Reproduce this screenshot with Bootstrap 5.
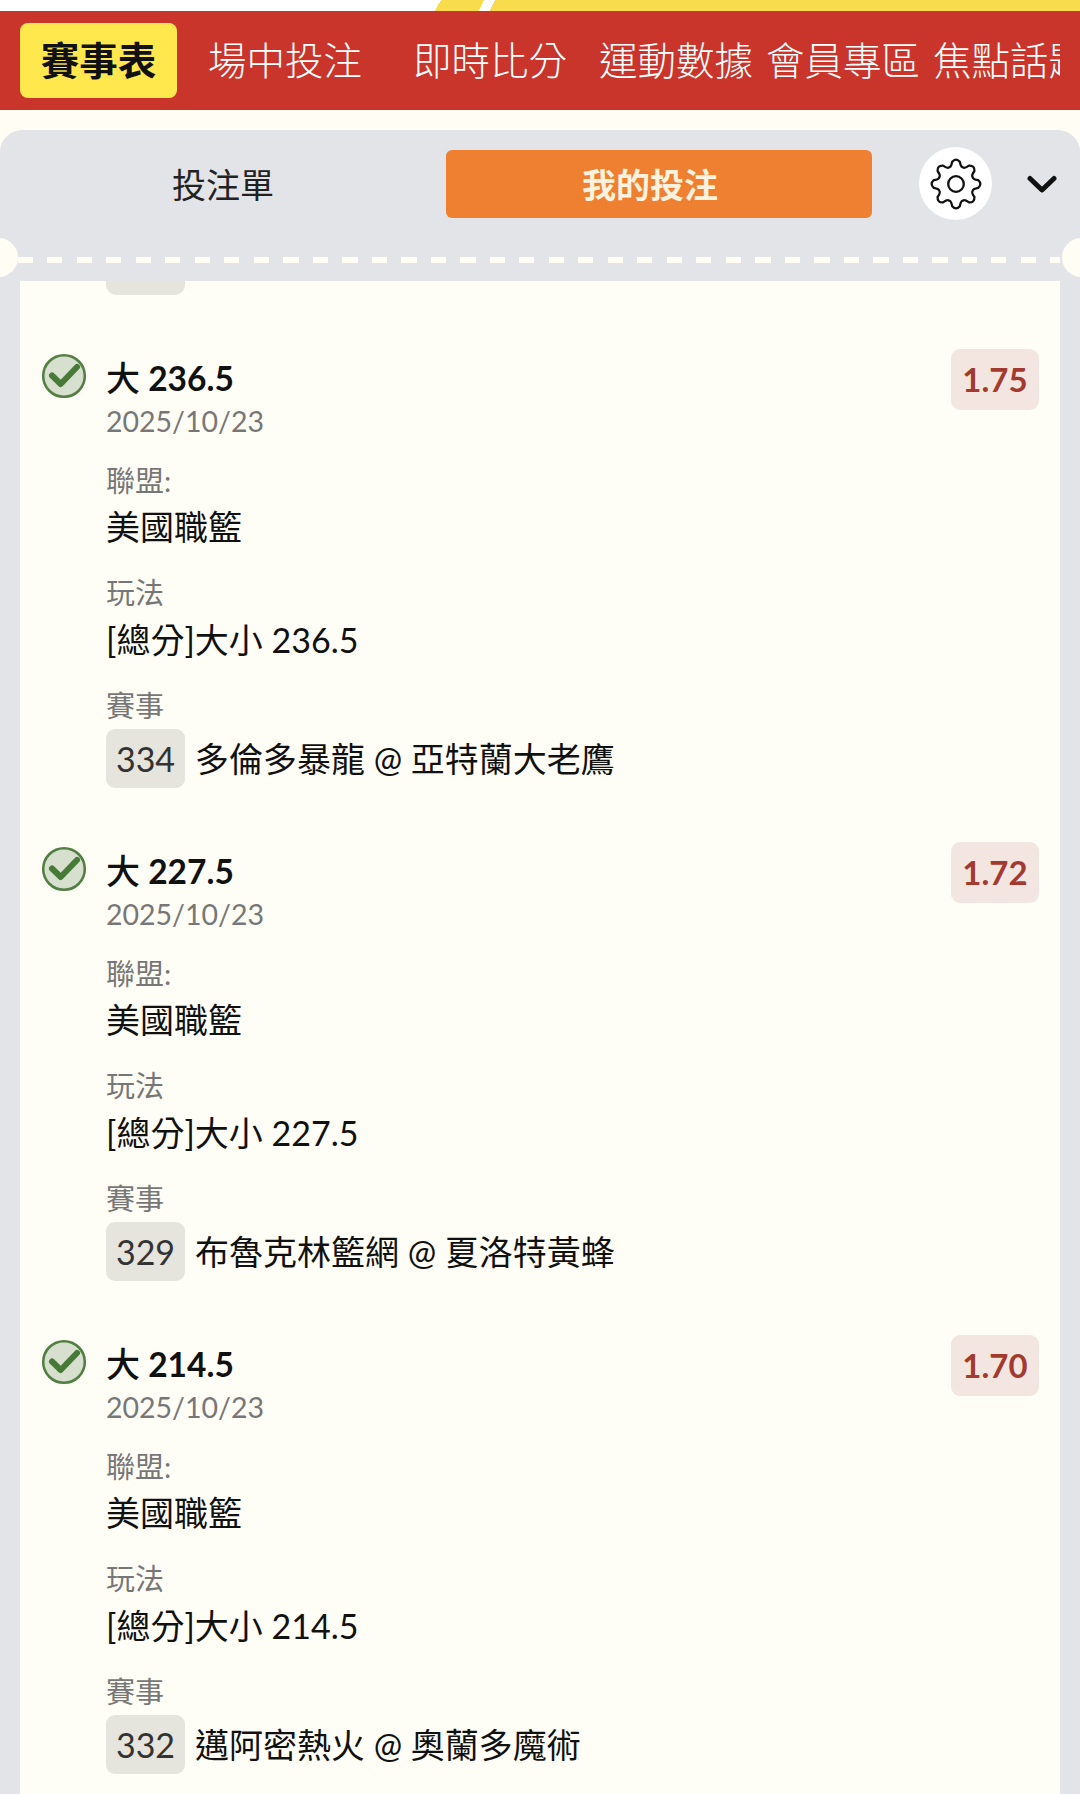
<!DOCTYPE html>
<html lang="zh-Hant">
<head>
    <meta charset="UTF-8">
    <meta name="viewport" content="width=device-width, initial-scale=1.0">
    <title>我的投注</title>
    <link href="https://cdn.jsdelivr.net/npm/bootstrap@5.3.3/dist/css/bootstrap.min.css" rel="stylesheet">
    <style>
        html, body { height: 1794px; overflow: hidden; }
        body { background: #fffdf4; font-family: Lato, "Noto Sans CJK TC", sans-serif; color: #111; }

        .top-strip { height: 11px; background: linear-gradient(118deg, #fff 0 40.6%, #f9dc4b 40.6% 44.6%, #fff 44.6% 45.6%, #f9dc4b 45.6%); }
        .main-nav { height: 99px; background: #c9342b; padding: 0 20px; }
        .nav-scroll { font-size: 38.5px; color: #fff; white-space: nowrap; }
        .nav-scroll span { flex: none; font-weight: 300; }
        .nav-active { width: 157px; height: 75px; background: #ffe84d; color: #111; font-weight: 700 !important; border-radius: 8px; }
        .gap-a { margin-left: 31px; }
        .gap-b { margin-left: 51px; }
        .gap-c { margin-left: 32px; }
        .gap-d { margin-left: 13px; }

        .slip-panel { margin-top: 20px; height: 1664px; background: #e2e4e7; border-radius: 22px 22px 0 0; position: relative; overflow: hidden; }
        .slip-head { height: 151px; padding-top: 20px; }
        .tab-plain { width: 446px; height: 68px; font-size: 34px; color: #222; }
        .tab-on { width: 426px; height: 68px; padding-right: 18px; background: #ef8031; color: #fff3df; font-size: 34px; font-weight: 700; border-radius: 6px; }
        .gear-btn { width: 73px; height: 73px; margin-left: 47px; margin-top: -3px; background: #fff; border-radius: 50%; }
        .chev-btn { margin-left: 35px; margin-top: 25px; line-height: 0; }

        .dash-line { position: absolute; left: 17.5px; right: 20px; top: 127px; height: 6px; background: repeating-linear-gradient(90deg, #fffdf4 0 15px, transparent 15px 29.5px); }
        .notch { position: absolute; top: 108px; width: 39px; height: 39px; background: #fffdf4; border-radius: 50%; }
        .notch-l { left: -21px; }
        .notch-r { right: -21px; }

        .slip-list { margin: 0 20px; height: 1513px; background: #fffef6; overflow: hidden; padding-left: 86px; padding-right: 21px; }
        .stub { width: 79px; height: 14px; background: #e5e4dd; border-radius: 0 0 10px 10px; }

        .bet-row { margin-top: 61px; position: relative; }
        .bet-check { position: absolute; left: -65px; top: -3px; }
        .bet-title { font-size: 33.5px; line-height: 44px; font-weight: 700; }
        .bet-title i { font-style: normal; font-weight: 500; font-size: 34px; }
        .bet-date { font-size: 28.5px; line-height: 42px; color: #777; }
        .bet-label { font-size: 29px; line-height: 40px; color: #777; margin-top: 19px; }
        .bet-first { margin-top: 19px; }
        .bet-value { font-size: 34px; line-height: 54px; color: #111; }
        .bet-first + .bet-value { margin-top: -1px; }
        .odds-tag { position: absolute; right: 0; top: -7px; width: 88px; height: 61px; background: #f3e6e0; color: #a33a30; font-size: 33px; font-weight: 700; border-radius: 9px; }
        .game-no { width: 79px; height: 59px; background: #e5e4dd; border-radius: 9px; margin-right: 10px; color: #333; }
        .game-line { margin-top: 3px; font-size: 34px; }
    </style>
</head>
<body>
    <div class="top-strip"></div>
    <div class="main-nav d-flex align-items-center">
        <div class="nav-scroll d-flex align-items-center overflow-hidden w-100">
            <span class="nav-active d-flex align-items-center justify-content-center">賽事表</span>
            <span class="gap-a">場中投注</span>
            <span class="gap-b">即時比分</span>
            <span class="gap-c">運動數據</span>
            <span class="gap-d">會員專區</span>
            <span class="gap-d">焦點話題</span>
        </div>
    </div>

    <div class="slip-panel">
        <div class="slip-head d-flex align-items-start">
            <div class="tab-plain d-flex align-items-center justify-content-center">投注單</div>
            <div class="tab-on d-flex align-items-center justify-content-center">我的投注</div>
            <div class="gear-btn d-flex align-items-center justify-content-center">
                <svg width="52" height="52" viewBox="0 0 52 52"><path id="gearPath" fill="none" stroke="#111" stroke-width="2.3" stroke-linejoin="round"/><circle cx="26" cy="26" r="7.8" fill="none" stroke="#111" stroke-width="2.3"/></svg>
            </div>
            <div class="chev-btn">
                <svg width="30" height="20" viewBox="0 0 30 20"><path d="M3 3.5 15 15 27 3.5" fill="none" stroke="#111" stroke-width="5" stroke-linecap="round" stroke-linejoin="round"/></svg>
            </div>
        </div>
        <div class="dash-line"></div>
        <div class="notch notch-l"></div>
        <div class="notch notch-r"></div>

        <div class="slip-list" id="slipList">
            <div class="stub"></div>
        </div>
    </div>

    <script src="https://cdn.jsdelivr.net/npm/bootstrap@5.3.3/dist/js/bootstrap.bundle.min.js"></script>
    <script>
        const bets = [
            { line: "236.5", odds: "1.75", no: "334", game: "多倫多暴龍 @ 亞特蘭大老鷹" },
            { line: "227.5", odds: "1.72", no: "329", game: "布魯克林籃網 @ 夏洛特黃蜂" },
            { line: "214.5", odds: "1.70", no: "332", game: "邁阿密熱火 @ 奧蘭多魔術" }
        ];

        const list = document.getElementById("slipList");
        bets.forEach(bet => {
            const row = document.createElement("div");
            row.className = "bet-row";
            row.innerHTML = `
                <svg class="bet-check" width="46" height="46" viewBox="0 0 46 46">
                    <circle cx="23" cy="23" r="20.8" fill="#d7e0ce" stroke="#527f42" stroke-width="2.6"/>
                    <path d="M11 22.5 19.7 31 36 14" fill="none" stroke="#477a37" stroke-width="6" stroke-linecap="round" stroke-linejoin="round"/>
                </svg>
                <div class="odds-tag d-flex align-items-center justify-content-center">${bet.odds}</div>
                <div class="bet-title"><i>大</i> ${bet.line}</div>
                <div class="bet-date">2025/10/23</div>
                <div class="bet-label bet-first">聯盟:</div>
                <div class="bet-value">美國職籃</div>
                <div class="bet-label">玩法</div>
                <div class="bet-value">[總分]大小 ${bet.line}</div>
                <div class="bet-label">賽事</div>
                <div class="game-line d-flex align-items-center">
                    <span class="game-no d-flex align-items-center justify-content-center">${bet.no}</span>
                    <span>${bet.game}</span>
                </div>`;
            list.appendChild(row);
        });

        // 8 teeth gear outline, rounded tips and valleys
        const at = (a, r) => (26 + r * Math.cos(a)).toFixed(1) + " " + (26 + r * Math.sin(a)).toFixed(1);
        let d = "M" + at(-Math.PI / 2 - Math.PI / 8, 18);
        for (let i = 0; i < 8; i++) {
            const a = i * Math.PI / 4 - Math.PI / 2;
            d += "Q" + at(a - 0.28, 17.5) + " " + at(a - 0.17, 22.5);
            d += "Q" + at(a, 26.5) + " " + at(a + 0.17, 22.5);
            d += "Q" + at(a + 0.28, 17.5) + " " + at(a + Math.PI / 8, 18);
        }
        document.getElementById("gearPath").setAttribute("d", d + "Z");
    </script>
</body>
</html>
